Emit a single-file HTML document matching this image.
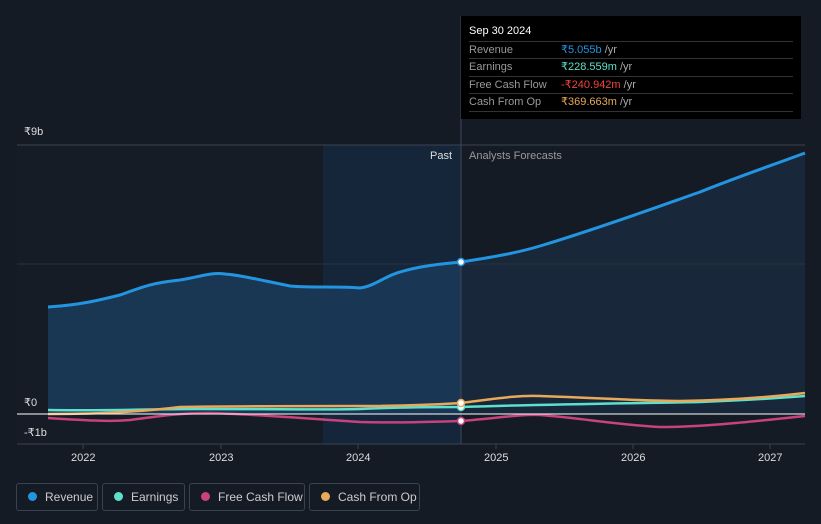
<!DOCTYPE html><html><head><style>
html,body{margin:0;width:821px;height:524px;background:#151b25;font-family:"Liberation Sans",sans-serif;overflow:hidden;position:relative}
.tt{position:absolute;left:461px;top:16px;width:340px;height:103px;background:#000;color:#fff;font-size:11px}
.tt .h{position:absolute;left:8px;top:9px;font-size:11px}
.row{position:absolute;left:8px;width:324px;height:17px;border-top:1px solid #333;color:#999;line-height:17px}
.row span{position:absolute;left:92px}
.row i{font-style:normal;color:#aaa}
.lg{position:absolute;top:483px;height:28px;border:1px solid #3a4250;border-radius:3px;color:#ccc;font-size:12px;line-height:26px;box-sizing:border-box;padding-left:27px;white-space:nowrap}
.lg b{position:absolute;left:11px;top:8px;width:9px;height:9px;border-radius:50%}
.ax{position:absolute;color:#ddd;font-size:11px}
</style></head><body>
<svg width="821" height="524" style="position:absolute;left:0;top:0">
<rect x="17" y="145" width="306" height="299" fill="#161c26"/>
<rect x="323" y="145" width="138" height="299" fill="#15263a"/>
<path d="M48,307 C80,305 100,300 120,295 C140,288 150,283 180,280 C200,277 210,272 225,274 C240,275 260,280 290,286 C310,288 340,286 360,288 C375,286 385,276 400,272 C420,266 440,264 461,262 L461,414 L48,414Z" fill="#1a3b5a" opacity=".85"/>
<path d="M461,262 C500,256 520,252 540,246 C600,228 660,206 700,192 C740,176 770,166 805,153 L805,414 L461,414Z" fill="#18283a"/>
<line x1="17" y1="145" x2="805" y2="145" stroke="#3a4250"/>
<line x1="17" y1="264" x2="805" y2="264" stroke="#2a3240"/>
<line x1="17" y1="444" x2="805" y2="444" stroke="#3a4250"/>
<line x1="461" y1="16" x2="461" y2="444" stroke="#3a4a5a"/>
<path d="M48,307 C80,305 100,300 120,295 C140,288 150,283 180,280 C200,277 210,272 225,274 C240,275 260,280 290,286 C310,288 340,286 360,288 C375,286 385,276 400,272 C420,266 440,264 461,262 C500,256 520,252 540,246 C600,228 660,206 700,192 C740,176 770,166 805,153" fill="none" stroke="#2394df" stroke-width="3"/>
<path d="M48,410 C100,411 150,409 200,409 C280,409 330,410 360,409 C400,407 430,407 461,407 C550,404 650,403 700,402 C750,400 780,398 805,396" fill="none" stroke="#5ee0cb" stroke-width="2.5"/>
<path d="M48,418 C80,420 110,422 130,420 C160,416 180,413 210,413 C250,414 300,418 360,422 C400,423 430,422 461,421 C500,418 520,414 540,415 C580,418 620,425 660,427 C700,427 740,423 805,416" fill="none" stroke="#c7427f" stroke-width="2.5"/>
<path d="M48,414 C100,414 140,412 180,407 C250,406 300,406 360,406 C400,406 430,405 461,403 C500,398 520,395 540,396 C600,398 640,401 680,401 C740,400 780,396 805,393" fill="none" stroke="#e8a95b" stroke-width="2.5"/>
<line x1="17" y1="414" x2="805" y2="414" stroke="#fff"/>
<circle cx="461" cy="262" r="3.5" fill="#fff" stroke="#2394df" stroke-width="1.5"/>
<circle cx="461" cy="407" r="3.5" fill="#fff" stroke="#5ee0cb" stroke-width="1.5"/>
<circle cx="461" cy="403" r="3.5" fill="#fff" stroke="#e8a95b" stroke-width="1.5"/>
<circle cx="461" cy="421" r="3.5" fill="#fff" stroke="#c7427f" stroke-width="1.5"/>
<g stroke="#3a4250"><line x1="83" y1="444" x2="83" y2="449"/><line x1="221" y1="444" x2="221" y2="449"/><line x1="358" y1="444" x2="358" y2="449"/><line x1="496" y1="444" x2="496" y2="449"/><line x1="633" y1="444" x2="633" y2="449"/><line x1="770" y1="444" x2="770" y2="449"/></g>
</svg>
<div class="ax" style="left:24px;top:125px">₹9b</div>
<div class="ax" style="left:24px;top:396px">₹0</div>
<div class="ax" style="left:24px;top:426px">-₹1b</div>
<div class="ax" style="left:430px;top:150px">Past</div>
<div class="ax" style="left:469px;top:150px;color:#999">Analysts Forecasts</div>
<div class="ax" style="left:71px;top:452px">2022</div>
<div class="ax" style="left:209px;top:452px">2023</div>
<div class="ax" style="left:346px;top:452px">2024</div>
<div class="ax" style="left:484px;top:452px">2025</div>
<div class="ax" style="left:621px;top:452px">2026</div>
<div class="ax" style="left:758px;top:452px">2027</div>
<div class="tt"><div class="h">Sep 30 2024</div>
<div class="row" style="top:25px">Revenue<span><b style="font-weight:normal;color:#2394df">₹5.055b</b> <i>/yr</i></span></div>
<div class="row" style="top:42px">Earnings<span><b style="font-weight:normal;color:#5ee0cb">₹228.559m</b> <i>/yr</i></span></div>
<div class="row" style="top:60px">Free Cash Flow<span><b style="font-weight:normal;color:#f0443c">-₹240.942m</b> <i>/yr</i></span></div>
<div class="row" style="top:77px;border-bottom:1px solid #333">Cash From Op<span><b style="font-weight:normal;color:#e8a95b">₹369.663m</b> <i>/yr</i></span></div>
</div>
<div class="lg" style="left:16px;width:82px;padding-left:28px"><b style="background:#2394df"></b>Revenue</div>
<div class="lg" style="left:102px;width:83px;padding-left:28px"><b style="background:#5ee0cb"></b>Earnings</div>
<div class="lg" style="left:189px;width:116px;padding-left:28px"><b style="background:#c7427f"></b>Free Cash Flow</div>
<div class="lg" style="left:309px;width:111px;padding-left:28px"><b style="background:#e8a95b"></b>Cash From Op</div>
</body></html>
